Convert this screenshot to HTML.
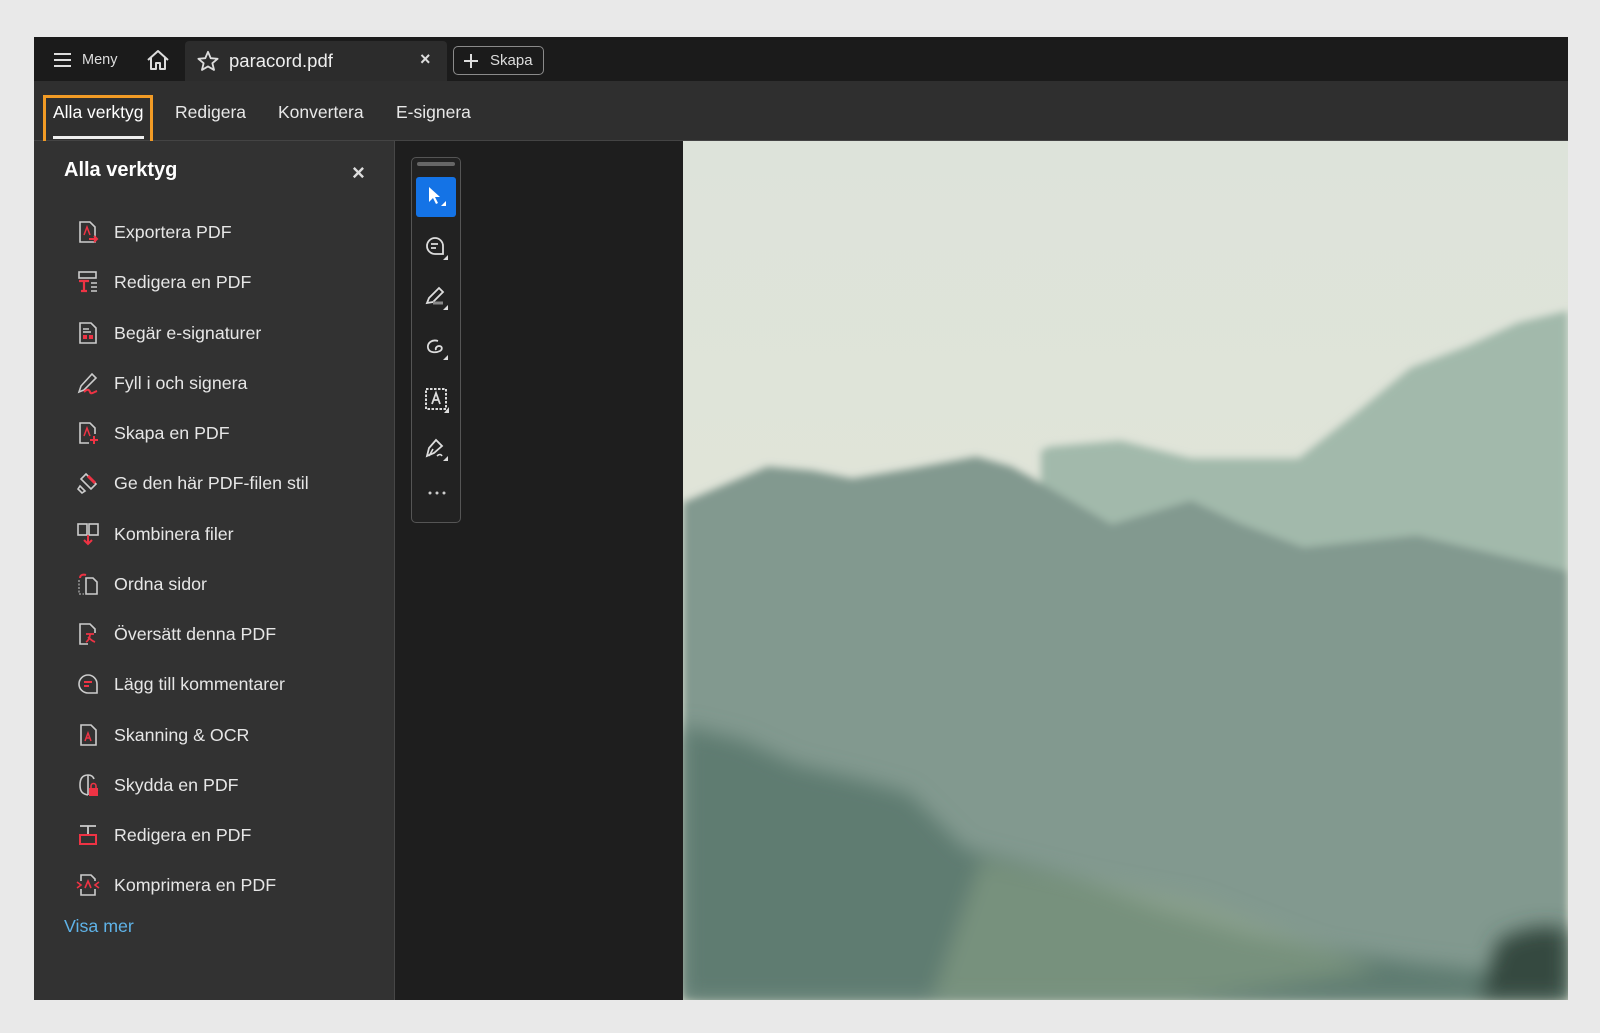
<!DOCTYPE html>
<html><head><meta charset="utf-8"><style>
*{margin:0;padding:0;box-sizing:border-box}
body{width:1600px;height:1033px;background:#e9e9e9;font-family:"Liberation Sans",sans-serif;position:relative;overflow:hidden;color:#e8e8e8}
.abs{position:absolute}
#top{left:34px;top:37px;width:1534px;height:44px;background:#1b1b1b}
#row2{left:34px;top:81px;width:1534px;height:60px;background:#2f2f2f;border-bottom:1px solid #444}
#panel{left:34px;top:141px;width:361px;height:859px;background:#323232;border-right:1px solid #474747}
#dark{left:395px;top:141px;width:288px;height:859px;background:#1e1e1e}
#img{left:683px;top:141px;width:885px;height:859px;overflow:hidden}
.item{position:absolute;left:0;height:30px;width:340px;font-size:17.8px;color:#e6e6e6}
.item svg{position:absolute;left:42px;top:3px}
.item span{position:absolute;left:80px;top:5px}
.tb svg{position:absolute}
.nav{font-size:17.5px}
</style></head><body>
<div id="top" class="abs"></div>
<svg class="abs" style="left:53px;top:52px" width="19" height="16"><path d="M1 2h17M1 8h17M1 14h17" stroke="#ddd" stroke-width="2"/></svg>
<div class="abs" style="left:82px;top:52px;font-size:14.5px;color:#ddd">Meny</div>
<svg class="abs" style="left:146px;top:49px" width="24" height="22" viewBox="0 0 24 22"><path d="M2 11L12 2l10 9M5 9v11h5v-6h4v6h5V9" fill="none" stroke="#ddd" stroke-width="2" stroke-linejoin="round"/></svg>
<div class="abs" style="left:185px;top:41px;width:262px;height:40px;background:#2c2c2c;border-radius:4px 4px 0 0"></div>
<svg class="abs" style="left:197px;top:50px" width="22" height="21" viewBox="0 0 24 23"><path d="M12 2l3 7 7.5.6-5.7 4.9 1.8 7.3L12 18l-6.6 3.8 1.8-7.3L1.5 9.6 9 9z" fill="none" stroke="#ddd" stroke-width="2" stroke-linejoin="round"/></svg>
<div class="abs" style="left:229px;top:50px;font-size:18.5px;color:#eee">paracord.pdf</div>
<div class="abs" style="left:420px;top:49px;font-size:18px;color:#ddd;font-weight:bold">×</div>
<div class="abs" style="left:453px;top:46px;width:91px;height:29px;border:1px solid #8a8a8a;border-radius:5px"></div>
<svg class="abs" style="left:464px;top:54px" width="14" height="14"><path d="M7 0v14M0 7h14" stroke="#ddd" stroke-width="2"/></svg>
<div class="abs" style="left:490px;top:52px;font-size:15px;color:#ddd">Skapa</div>

<div id="row2" class="abs"></div>
<div class="abs" style="left:43px;top:95px;width:110px;height:50px;border:3px solid #f29b25"></div>
<div class="abs nav" style="left:53px;top:102px;color:#fff">Alla verktyg</div>
<div class="abs" style="left:53px;top:136px;width:91px;height:3px;background:#eee"></div>
<div class="abs nav" style="left:175px;top:102px">Redigera</div>
<div class="abs nav" style="left:278px;top:102px">Konvertera</div>
<div class="abs nav" style="left:396px;top:102px">E-signera</div>

<div id="panel" class="abs">
<div class="abs" style="left:30px;top:18px;font-size:20px;font-weight:bold;color:#fff">Alla verktyg</div>
<div class="abs" style="left:318px;top:19px;font-size:22px;font-weight:bold;color:#ddd">×</div>

<div class="item" style="top:76px"><svg width="24" height="24"><path d="M4 2h10l5 5v15H4z" fill="none" stroke="#ccc" stroke-width="1.6"/><path d="M8 15l3-8 3 8" fill="none" stroke="#e34" stroke-width="1.5"/><path d="M13 19h8M18 16l3 3-3 3" stroke="#e34" stroke-width="2" fill="none"/></svg><span>Exportera PDF</span></div>
<div class="item" style="top:126px"><svg width="24" height="24"><rect x="3" y="2" width="17" height="6" fill="none" stroke="#ccc" stroke-width="1.6"/><path d="M3 11h10M8 11v10M5 21h6" stroke="#e34" stroke-width="2.2"/><path d="M15 13h6M15 17h6M15 21h6" stroke="#ccc" stroke-width="1.5"/></svg><span>Redigera en PDF</span></div>
<div class="item" style="top:177px"><svg width="24" height="24"><path d="M4 2h11l5 5v15H4z" fill="none" stroke="#ccc" stroke-width="1.6"/><path d="M7 8h6M7 11h8" stroke="#ccc" stroke-width="1.4"/><rect x="7" y="14" width="4" height="4" fill="#e34"/><rect x="13" y="14" width="4" height="4" fill="#e34"/></svg><span>Begär e-signaturer</span></div>
<div class="item" style="top:227px"><svg width="24" height="24"><path d="M3 21l2-6L16 3l4 4L8 19z" fill="none" stroke="#ccc" stroke-width="1.6"/><path d="M8 21c3-3 5-3 6 0s4 0 7-1" stroke="#e34" stroke-width="2" fill="none"/></svg><span>Fyll i och signera</span></div>
<div class="item" style="top:277px"><svg width="24" height="24"><path d="M13 22H4V2h10l5 5v6" fill="none" stroke="#ccc" stroke-width="1.6"/><path d="M8 15l3-8 3 8" fill="none" stroke="#e34" stroke-width="1.5"/><path d="M18 15v8M14 19h8" stroke="#e34" stroke-width="2"/></svg><span>Skapa en PDF</span></div>
<div class="item" style="top:327px"><svg width="24" height="24"><path d="M10 3l10 10-5 5L5 8z" fill="none" stroke="#ccc" stroke-width="1.6"/><path d="M4 15l5 5-3 2-4-4z" fill="none" stroke="#ccc" stroke-width="1.6"/><path d="M12 5l7 7" stroke="#e34" stroke-width="3"/></svg><span>Ge den här PDF-filen stil</span></div>
<div class="item" style="top:378px"><svg width="24" height="24"><rect x="2" y="2" width="9" height="11" fill="none" stroke="#ccc" stroke-width="1.6"/><rect x="13" y="2" width="9" height="11" fill="none" stroke="#ccc" stroke-width="1.6"/><path d="M12 13v9M8 18l4 4 4-4" stroke="#e34" stroke-width="2" fill="none"/></svg><span>Kombinera filer</span></div>
<div class="item" style="top:428px"><svg width="24" height="24"><path d="M10 6h7l4 4v12H10z" fill="none" stroke="#ccc" stroke-width="1.6"/><path d="M3 8v14h5" fill="none" stroke="#aaa" stroke-width="1.3" stroke-dasharray="2 1.5"/><path d="M4 6c0-3 3-4 6-3" stroke="#e34" stroke-width="2" fill="none"/></svg><span>Ordna sidor</span></div>
<div class="item" style="top:478px"><svg width="24" height="24"><path d="M12 22H4V2h10l5 5v4" fill="none" stroke="#ccc" stroke-width="1.6"/><path d="M10 12h8M14 12c0 4-2 7-4 8M12 15c2 2 4 4 7 5" stroke="#e34" stroke-width="1.8" fill="none"/></svg><span>Översätt denna PDF</span></div>
<div class="item" style="top:528px"><svg width="24" height="24"><path d="M12 3a9 9 0 1 0 0 18h9v-9a9 9 0 0 0-9-9z" fill="none" stroke="#ccc" stroke-width="1.6"/><path d="M8 10h8M8 14h5" stroke="#e34" stroke-width="2"/></svg><span>Lägg till kommentarer</span></div>
<div class="item" style="top:579px"><svg width="24" height="24"><path d="M5 2h10l5 5v15H5z" fill="none" stroke="#ccc" stroke-width="1.6"/><path d="M9 18l3-8 3 8M10 15h4" fill="none" stroke="#e34" stroke-width="1.5"/></svg><span>Skanning &amp; OCR</span></div>
<div class="item" style="top:629px"><svg width="24" height="24"><path d="M12 2C6 2 4 6 4 12s2 9 8 10" fill="none" stroke="#ccc" stroke-width="1.6"/><path d="M12 2v20M12 2c3 0 5 1 6 4" fill="none" stroke="#ccc" stroke-width="1.6"/><rect x="13" y="15" width="9" height="8" fill="#e34"/><path d="M15 15v-2a2.5 2.5 0 0 1 5 0v2" stroke="#e34" stroke-width="1.6" fill="none"/></svg><span>Skydda en PDF</span></div>
<div class="item" style="top:679px"><svg width="24" height="24"><path d="M4 3h16M12 3v8" stroke="#ccc" stroke-width="1.8"/><rect x="4" y="12" width="16" height="9" fill="none" stroke="#e34" stroke-width="2"/></svg><span>Redigera en PDF</span></div>
<div class="item" style="top:729px"><svg width="24" height="24"><path d="M5 8V2h10l4 4v2M5 16v6h14v-6" fill="none" stroke="#ccc" stroke-width="1.6"/><path d="M1 9l4 3-4 3M23 9l-4 3 4 3M9 15l3-7 3 7" stroke="#e34" stroke-width="1.6" fill="none"/></svg><span>Komprimera en PDF</span></div>
<div class="abs" style="left:30px;top:775px;font-size:17.8px;color:#5fb3e8">Visa mer</div>
</div>

<div id="dark" class="abs"></div>
<div class="abs tb" style="left:411px;top:157px;width:50px;height:366px;border:1px solid #555;border-radius:5px;background:#222">
<div class="abs" style="left:5px;top:4px;width:38px;height:4px;background:#666;border-radius:2px"></div>
<div class="abs" style="left:4px;top:19px;width:40px;height:40px;background:#1473e6;border-radius:3px"></div>
<svg style="left:14px;top:27px" width="22" height="24"><path d="M3 2v15l4-4 3 6 2-1-3-6h5z" fill="#fff"/><path d="M20 16v5h-5z" fill="#fff"/></svg>
<svg style="left:12px;top:77px" width="26" height="26"><path d="M11 3a8 8 0 1 0 0 16h8v-8a8 8 0 0 0-8-8z" fill="none" stroke="#ddd" stroke-width="1.8"/><path d="M7 9h7M7 13h5" stroke="#ddd" stroke-width="1.8"/><path d="M24 20v5h-5z" fill="#ddd"/></svg>
<svg style="left:12px;top:127px" width="26" height="26"><path d="M3 18l2-5L15 3l4 4L9 17z" fill="none" stroke="#ddd" stroke-width="1.8"/><path d="M9 18h10" stroke="#888" stroke-width="3"/><path d="M24 20v5h-5z" fill="#ddd"/></svg>
<svg style="left:12px;top:177px" width="26" height="26"><path d="M14 6C8 4 3 8 4 13s8 5 12 3c3-2 2-5-1-5-2 0-4 2-3 4" fill="none" stroke="#ddd" stroke-width="1.8"/><path d="M24 20v5h-5z" fill="#ddd"/></svg>
<svg style="left:12px;top:228px" width="26" height="28"><rect x="2" y="3" width="20" height="20" fill="none" stroke="#ddd" stroke-width="2" stroke-dasharray="2.5 1.5"/><path d="M8 18l4-11 4 11M9.5 14h5" fill="none" stroke="#ddd" stroke-width="1.8"/><path d="M25 21v6h-5z" fill="#ddd"/></svg>
<svg style="left:12px;top:278px" width="26" height="26"><path d="M3 20l2-8 7-8 6 6-8 7z" fill="none" stroke="#ddd" stroke-width="1.8"/><path d="M9 13l-4 7M13 20c2-2 4-2 5 0" stroke="#ddd" stroke-width="1.6" fill="none"/><path d="M24 20v5h-5z" fill="#ddd"/></svg>
<svg style="left:12px;top:332px" width="26" height="6"><circle cx="6" cy="3" r="1.5" fill="#ccc"/><circle cx="13" cy="3" r="1.5" fill="#ccc"/><circle cx="20" cy="3" r="1.5" fill="#ccc"/></svg>
</div>

<div id="img" class="abs">
<svg width="885" height="859" viewBox="0 0 890 860" preserveAspectRatio="none">
<defs>
<linearGradient id="sky" x1="0" y1="0" x2="0" y2="1"><stop offset="0" stop-color="#dde3da"/><stop offset="1" stop-color="#e4e5d6"/></linearGradient>
<filter id="b"><feGaussianBlur stdDeviation="4"/></filter>
<filter id="b2"><feGaussianBlur stdDeviation="10"/></filter>
</defs>
<rect width="890" height="860" fill="url(#sky)"/>
<g filter="url(#b)">
<path d="M360 310L369 306 440 300 511 318 619 318 680 270 732 227 790 205 840 182 890 170V860H360z" fill="#a2b9ab"/>
<path d="M0 362L40 345 85 326 130 330 170 338 230 328 295 316 330 326 352 338 431 384 511 360 560 383 624 407 738 395 890 431V860H0z" fill="#82998f"/>
</g>
<g filter="url(#b2)">
<path d="M0 585L60 600 113 624 180 640 227 653 284 709 397 738 480 770 567 795 650 810 738 823 890 840V860H0z" fill="#5f7c71"/>
<path d="M300 720 520 760 700 830 500 860 250 860z" fill="#8fa58a" opacity=".5"/>
<path d="M820 800Q860 780 890 790V860H800z" fill="#34483f"/>
</g>
</svg>
</div>
</body></html>
